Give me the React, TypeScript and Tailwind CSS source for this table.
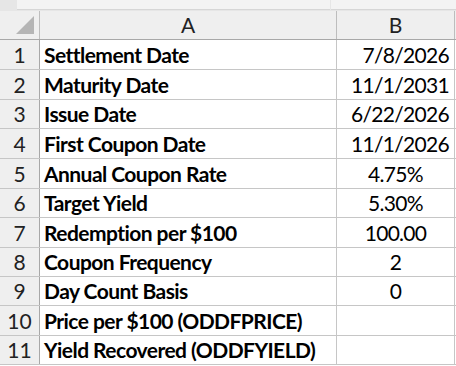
import React from "react";

const rows: { label: string; value: string; align: "right" | "center"; h: string }[] = [
  { label: "Settlement Date", value: "7/8/2026", align: "right", h: "h-[30px]" },
  { label: "Maturity Date", value: "11/1/2031", align: "right", h: "h-[30px]" },
  { label: "Issue Date", value: "6/22/2026", align: "right", h: "h-[29px]" },
  { label: "First Coupon Date", value: "11/1/2026", align: "right", h: "h-[30px]" },
  { label: "Annual Coupon Rate", value: "4.75%", align: "center", h: "h-[30px]" },
  { label: "Target Yield", value: "5.30%", align: "center", h: "h-[29px]" },
  { label: "Redemption per $100", value: "100.00", align: "center", h: "h-[30px]" },
  { label: "Coupon Frequency", value: "2", align: "center", h: "h-[29px]" },
  { label: "Day Count Basis", value: "0", align: "center", h: "h-[29px]" },
  { label: "Price per $100 (ODDFPRICE)", value: "", align: "center", h: "h-[30px]" },
  { label: "Yield Recovered (ODDFYIELD)", value: "", align: "center", h: "h-[29px]" },
];

export default function App() {
  return (
    <div
      className="w-[456px] h-[366px] bg-white overflow-hidden text-black"
      style={{ fontFamily: "Lato, 'Open Sans', sans-serif" }}
    >
      {/* top band (formula bar remnants) */}
      <div className="flex h-[11px] bg-[#e6e6e6]">
        <div className="w-[17px]" />
        <div className="w-[313px] h-[10px] bg-[#f3f3f3] border-b border-[#d6d6d6]" />
        <div className="w-[1px]" />
        <div className="flex-1 h-[10px] bg-[#f3f3f3] border-b border-[#d6d6d6]" />
      </div>
      {/* column header */}
      <div className="flex h-[29px] bg-[#efefef] border-b border-[#a8a8a8]">
        <div className="relative w-[40px] border-r border-[#bdbdbd]">
          <svg className="absolute left-[16px] top-[5px]" width="19" height="19" viewBox="0 0 19 19">
            <polygon points="18,0 18,18 0,18" fill="#b5b5b5" />
          </svg>
        </div>
        <div className="w-[297px] border-r border-[#bdbdbd] flex items-center justify-center text-[21px] text-[#222]">
          A
        </div>
        <div className="w-[118px] border-r border-[#bdbdbd] flex items-center justify-center text-[21px] text-[#222]">
          B
        </div>
        <div className="flex-1" />
      </div>
      {rows.map((r, i) => (
        <div key={i} className={`flex ${r.h} border-b border-[#c6c6c6]`}>
          <div className="w-[40px] bg-[#efefef] border-r border-[#a8a8a8] flex items-center justify-center text-[21px] text-[#222]">
            {i + 1}
          </div>
          <div className="w-[297px] border-r border-[#c6c6c6] flex items-center pl-[4px] text-[21px] font-bold tracking-[-0.55px] whitespace-nowrap">
            {r.label}
          </div>
          <div
            className={`w-[118px] border-r border-[#c6c6c6] flex items-center text-[21px] tracking-[-0.7px] ${
              r.align === "right" ? "justify-end pr-[5px]" : "justify-center"
            }`}
          >
            {r.value}
          </div>
          <div className="flex-1" />
        </div>
      ))}
    </div>
  );
}
